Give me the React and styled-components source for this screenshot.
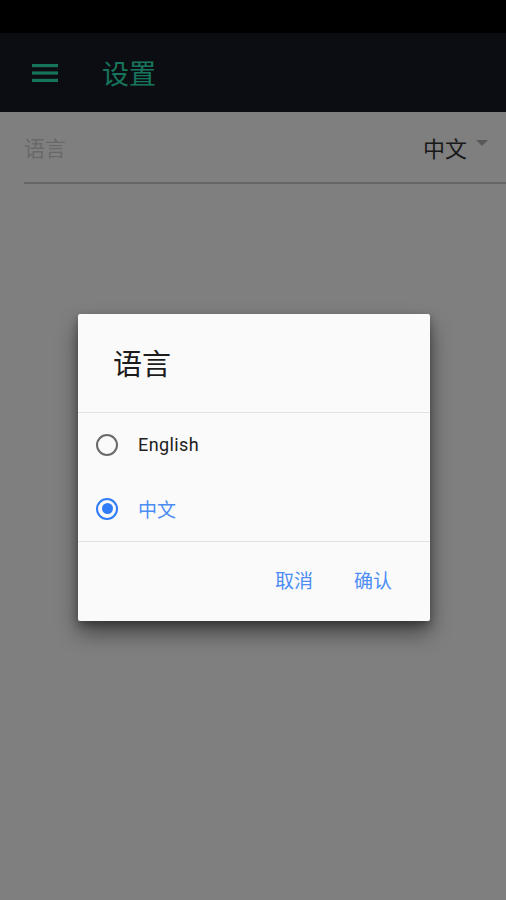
import React from "react";
import styled, { createGlobalStyle } from "styled-components";

const Global = createGlobalStyle`
  html, body { margin: 0; padding: 0; background: #fff; }
  body { font-family: Roboto, "Noto Sans CJK SC", "Noto Sans", sans-serif; }
  * { box-sizing: border-box; }
`;

const Screen = styled.div`
  position: relative;
  width: 506px;
  height: 900px;
  background: #ffffff;
  overflow: hidden;
  display: flex;
  flex-direction: column;
`;

const StatusBar = styled.div`
  height: 33px;
  background: #000;
`;

const AppBar = styled.header`
  height: 79px;
  background: #181a24;
  display: flex;
  align-items: center;
  padding-left: 32px;
  gap: 44px;
`;

const Title = styled.h1`
  margin: 0;
  font-size: 27px;
  font-weight: 400;
  color: #2ee8b8;
  font-family: "Noto Sans CJK SC", sans-serif;
  line-height: 1;
`;

const SettingRow = styled.div`
  height: 72px;
  margin-left: 24px;
  border-bottom: 2px solid #cccccc;
  display: flex;
  align-items: center;
  justify-content: space-between;
  padding-right: 18px;
  font-family: "Noto Sans CJK SC", sans-serif;
`;

const Label = styled.span`
  font-size: 21px;
  color: #d2d2d2;
`;

const Value = styled.span`
  font-size: 22px;
  color: #333;
  display: flex;
  align-items: center;
  gap: 9px;
  margin-left: -2px;
`;

const Caret = styled.span`
  width: 0;
  height: 0;
  border-left: 6px solid transparent;
  border-right: 6px solid transparent;
  border-top: 6px solid #b0b0b0;
  margin-top: -8px;
`;

const Overlay = styled.div`
  position: absolute;
  inset: 0;
  background: rgba(0, 0, 0, 0.5);
  display: flex;
  align-items: center;
  justify-content: center;
  padding-top: 34px;
  padding-left: 2px;
`;

const Dialog = styled.div`
  width: 352px;
  background: #fafafa;
  border-radius: 2px;
  box-shadow: 0 12px 22px rgba(0, 0, 0, 0.45), 0 4px 8px rgba(0, 0, 0, 0.3);
  font-family: "Noto Sans CJK SC", sans-serif;
`;

const DialogTitle = styled.div`
  height: 99px;
  padding-left: 35px;
  padding-bottom: 2px;
  display: flex;
  align-items: center;
  font-size: 29px;
  color: #1c1c1c;
  border-bottom: 1px solid #e2e2e2;
`;

const Options = styled.div`
  display: flex;
  flex-direction: column;
  border-bottom: 1px solid #e2e2e2;
`;

const Option = styled.label`
  height: 64px;
  display: flex;
  align-items: center;
  padding-left: 18px;
  gap: 20px;
  font-size: ${(p) => (p.$latin ? "18px" : "19px")};
  font-family: ${(p) => (p.$latin ? "Roboto, sans-serif" : '"Noto Sans CJK SC", sans-serif')};
  color: ${(p) => (p.$checked ? "#4b8cf5" : "#202020")};
  letter-spacing: ${(p) => (p.$latin ? "0.4px" : "0")};
`;

const Radio = styled.span`
  width: 22px;
  height: 22px;
  border-radius: 50%;
  border: 2px solid ${(p) => (p.$checked ? "#2f7cf6" : "#6a6a6a")};
  display: flex;
  align-items: center;
  justify-content: center;
  flex: none;
  &::after {
    content: "";
    width: 11px;
    height: 11px;
    border-radius: 50%;
    background: #2f7cf6;
    display: ${(p) => (p.$checked ? "block" : "none")};
  }
`;

const Actions = styled.div`
  height: 79px;
  display: flex;
  align-items: center;
  justify-content: flex-end;
  padding-right: 38px;
  padding-bottom: 4px;
  gap: 41px;
`;

const ActionButton = styled.button`
  border: none;
  background: none;
  padding: 0;
  font-family: "Noto Sans CJK SC", sans-serif;
  font-size: 19px;
  color: #4b8cf5;
`;

function Menu() {
  return (
    <svg width="26" height="18" viewBox="0 0 26 18">
      <rect x="0" y="0" width="26" height="3.2" fill="#2ee8b8" />
      <rect x="0" y="7.4" width="26" height="3.2" fill="#2ee8b8" />
      <rect x="0" y="14.8" width="26" height="3.2" fill="#2ee8b8" />
    </svg>
  );
}

export default function App() {
  return (
    <>
      <Global />
      <Screen>
        <StatusBar />
        <AppBar>
          <Menu />
          <Title>设置</Title>
        </AppBar>
        <SettingRow>
          <Label>语言</Label>
          <Value>
            中文
            <Caret />
          </Value>
        </SettingRow>
        <Overlay>
          <Dialog>
            <DialogTitle>语言</DialogTitle>
            <Options>
              <Option $latin>
                <Radio />
                English
              </Option>
              <Option $checked>
                <Radio $checked />
                中文
              </Option>
            </Options>
            <Actions>
              <ActionButton>取消</ActionButton>
              <ActionButton>确认</ActionButton>
            </Actions>
          </Dialog>
        </Overlay>
      </Screen>
    </>
  );
}
